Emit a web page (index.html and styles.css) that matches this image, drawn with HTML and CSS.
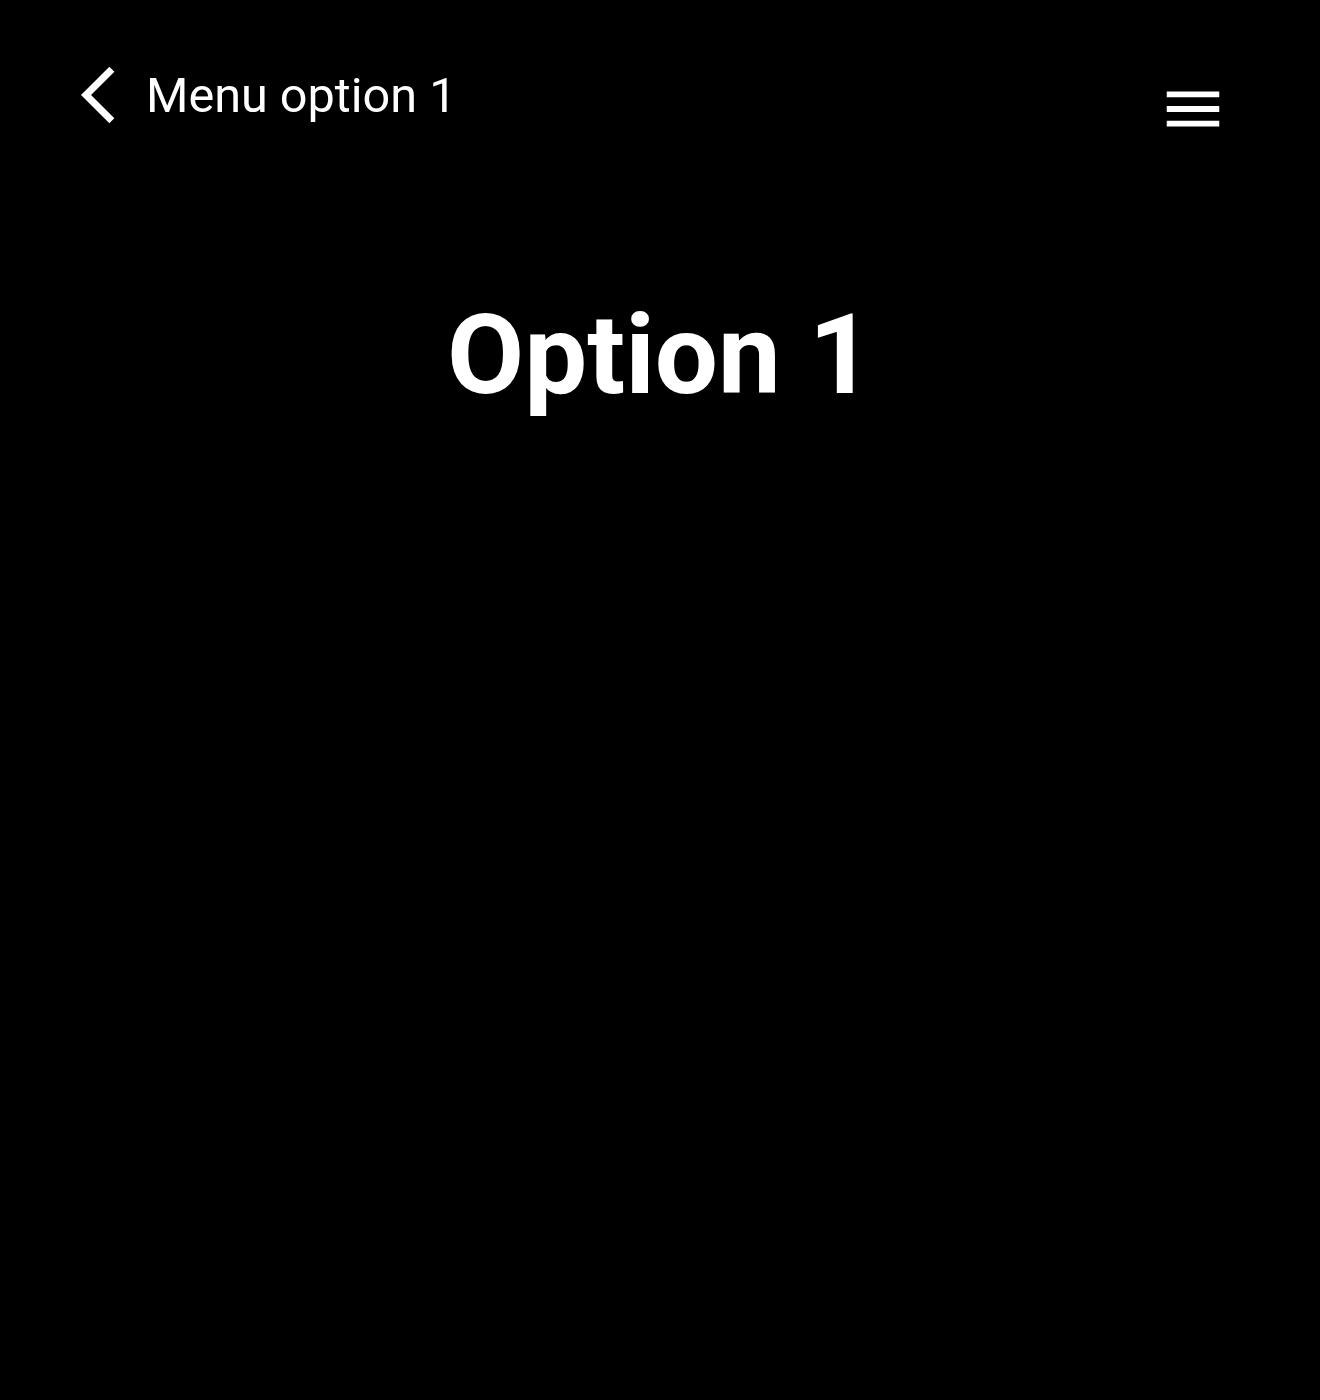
FILE: index.html
```html
<!DOCTYPE html>
<html lang="en">
<head>
<meta charset="utf-8">
<title>Option 1</title>
<link rel="stylesheet" href="styles.css">
</head>
<body>
<header class="topbar">
  <a class="back" href="#">
    <svg class="chev" width="68" height="68" viewBox="0 0 24 24" aria-hidden="true">
      <path d="M17.77 3.77 16 2 6 12l10 10 1.77-1.77L9.54 12z" fill="#fff"/>
    </svg>
    <span class="back-label">Menu option 1</span>
  </a>
  <button class="burger" aria-label="Menu">
    <svg width="70" height="70" viewBox="0 0 24 24" aria-hidden="true">
      <path d="M3 18h18v-2H3v2zm0-5h18v-2H3v2zm0-7v2h18V6H3z" fill="#fff"/>
    </svg>
  </button>
</header>
<main class="content">
  <h1 class="title">Option 1</h1>
</main>
</body>
</html>
```
FILE: styles.css
```css
html, body {
  margin: 0;
  background: #000;
  color: #fff;
  font-family: Roboto, "Liberation Sans", sans-serif;
}
body { min-height: 1400px; }
.topbar {
  display: flex;
  justify-content: space-between;
  align-items: flex-start;
  padding: 61px 92px 0 64px;
}
.back {
  display: flex;
  align-items: center;
  gap: 14px;
  color: #fff;
  text-decoration: none;
}
.chev { display: block; }
.back-label {
  font-size: 48.6px;
  line-height: normal;
  font-weight: 400;
}
.burger {
  margin-top: 13px;
  padding: 0;
  border: 0;
  background: none;
  display: block;
  line-height: 0;
}
.burger svg { display: block; }
.content {
  display: flex;
  justify-content: center;
}
.title {
  margin: 145px 0 0;
  font-size: 112px;
  line-height: normal;
  font-weight: 700;
}
```
